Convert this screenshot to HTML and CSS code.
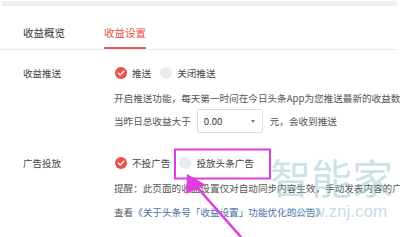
FILE: index.html
```html
<!DOCTYPE html>
<html lang="zh">
<head>
<meta charset="utf-8">
<link rel="stylesheet" href="styles.css">
</head>
<body>
<div class="page">
  <div class="topbar"></div>
  <div class="tabs">
    <div class="tab">收益概览</div>
    <div class="tab active">收益设置</div>
  </div>
  <div class="setting s1">
    <div class="label">收益推送</div>
    <div class="body">
      <div class="radios">
        <span class="radio checked"><svg viewBox="0 0 12 12" width="12" height="12"><circle cx="6" cy="6" r="6" fill="#f04e48"/><path d="M3.2 6.1 L5.2 8 L8.8 4.2" fill="none" stroke="#fff" stroke-width="1.4" stroke-linecap="round" stroke-linejoin="round"/></svg>推送</span>
        <span class="radio"><span class="dot"></span>关闭推送</span>
      </div>
      <div class="line desc">开启推送功能，每天第一时间在今日头条App为您推送最新的收益数据</div>
      <div class="line cond">
        <span>当昨日总收益大于</span>
        <span class="select"><span>0.00</span><span class="caret"></span></span>
        <span>元，会收到推送</span>
      </div>
    </div>
  </div>
  <div class="setting s2">
    <div class="label">广告投放</div>
    <div class="body">
      <div class="radios">
        <span class="radio checked"><svg viewBox="0 0 12 12" width="12" height="12"><circle cx="6" cy="6" r="6" fill="#f04e48"/><path d="M3.2 6.1 L5.2 8 L8.8 4.2" fill="none" stroke="#fff" stroke-width="1.4" stroke-linecap="round" stroke-linejoin="round"/></svg>不投广告</span>
        <span class="radio"><span class="dot"></span>投放头条广告</span>
      </div>
      <div class="line desc2">提醒：此页面的收益设置仅对自动同步内容生效，手动发表内容的广告设置请在发表时选择</div>
      <div class="line view">查看<a class="link">《关于头条号「收益设置」功能优化的公告》</a></div>
    </div>
  </div>
  <div class="watermark">
    <div class="wm-big">智能家</div>
    <div class="wm-small">www.znj.com</div>
  </div>
  <svg class="annot" width="400" height="237" viewBox="0 0 400 237">
    <rect x="175" y="149.5" width="95" height="29" fill="none" stroke="#de3ee0" stroke-width="2"/>
    <line x1="241" y1="237" x2="196" y2="186" stroke="#de3ee0" stroke-width="2.6"/>
    <polygon points="187,174 186,194 206,185" fill="#de3ee0"/>
  </svg>
</div>
</body>
</html>
```
FILE: styles.css
```css
html, body {
  margin: 0;
  padding: 0;
  background: #fff;
}
body {
  font-family: "Noto Sans CJK SC", "Noto Sans", sans-serif;
  color: #333;
  width: 400px;
  height: 237px;
  overflow: hidden;
}
.page {
  position: relative;
  width: 400px;
  height: 237px;
  overflow: hidden;
}
.topbar {
  height: 5px;
  margin: 1px 3px 0 2px;
  background: #eef0f4;
}
.tabs {
  display: flex;
  gap: 39px;
  padding-left: 23px;
  border-bottom: 1px solid #ececec;
  margin-right: 2px;
}
.tab {
  font-size: 10.5px;
  line-height: 14px;
  padding-top: 20px;
  padding-bottom: 7px;
  border-bottom: 2px solid transparent;
  color: #333;
}
.tab.active {
  color: #ec4a45;
  border-bottom-color: #ec5a55;
}
.setting {
  display: flex;
  padding-left: 23px;
}
.s1 { margin-top: 16px; }
.s2 { margin-top: 23px; }
.label {
  flex: 0 0 91px;
  width: 91px;
  font-size: 9.5px;
  line-height: 14px;
  color: #444;
  white-space: nowrap;
}
.body {
  display: flex;
  flex-direction: column;
  flex: 1 1 auto;
  min-width: 0;
  font-size: 9.6px;
  color: #555;
  white-space: nowrap;
}
.radios {
  display: flex;
  align-items: center;
  height: 14px;
}
.radio {
  display: flex;
  align-items: center;
  gap: 5px;
  line-height: 14px;
  color: #444;
  margin-right: 9px;
}
.radio svg { margin-left: 1px; }
.dot {
  width: 12px;
  height: 12px;
  border-radius: 50%;
  background: #e9ebee;
}
.line {
  line-height: 14px;
}
.desc { margin-top: 11px; }
.cond {
  display: flex;
  align-items: center;
  margin-top: 4px;
  height: 24px;
}
.select {
  display: flex;
  align-items: center;
  justify-content: space-between;
  box-sizing: border-box;
  flex: 0 0 66px;
  width: 66px;
  height: 24px;
  margin: 0 7px 0 6px;
  padding: 0 7px 0 6px;
  border: 1px solid #dcdcdc;
  border-radius: 2px;
  color: #333;
}
.caret {
  width: 0;
  height: 0;
  border-left: 2.5px solid transparent;
  border-right: 2.5px solid transparent;
  border-top: 3px solid #777;
}
.desc2 { margin-top: 11px; }
.view { margin-top: 10px; }
.link { color: #4b6ea6; }
.watermark {
  position: absolute;
  left: 270px;
  top: 150px;
  display: flex;
  flex-direction: column;
  align-items: center;
  pointer-events: none;
}
.wm-big {
  font-size: 41px;
  line-height: 52px;
  color: rgba(150, 195, 205, 0.5);
}
.wm-small {
  font-family: "Liberation Sans", Arial, sans-serif;
  font-size: 17px;
  line-height: 20px;
  color: rgba(165, 195, 208, 0.6);
  margin-left: 12px;
}
.annot {
  position: absolute;
  left: 0;
  top: 0;
}
```
